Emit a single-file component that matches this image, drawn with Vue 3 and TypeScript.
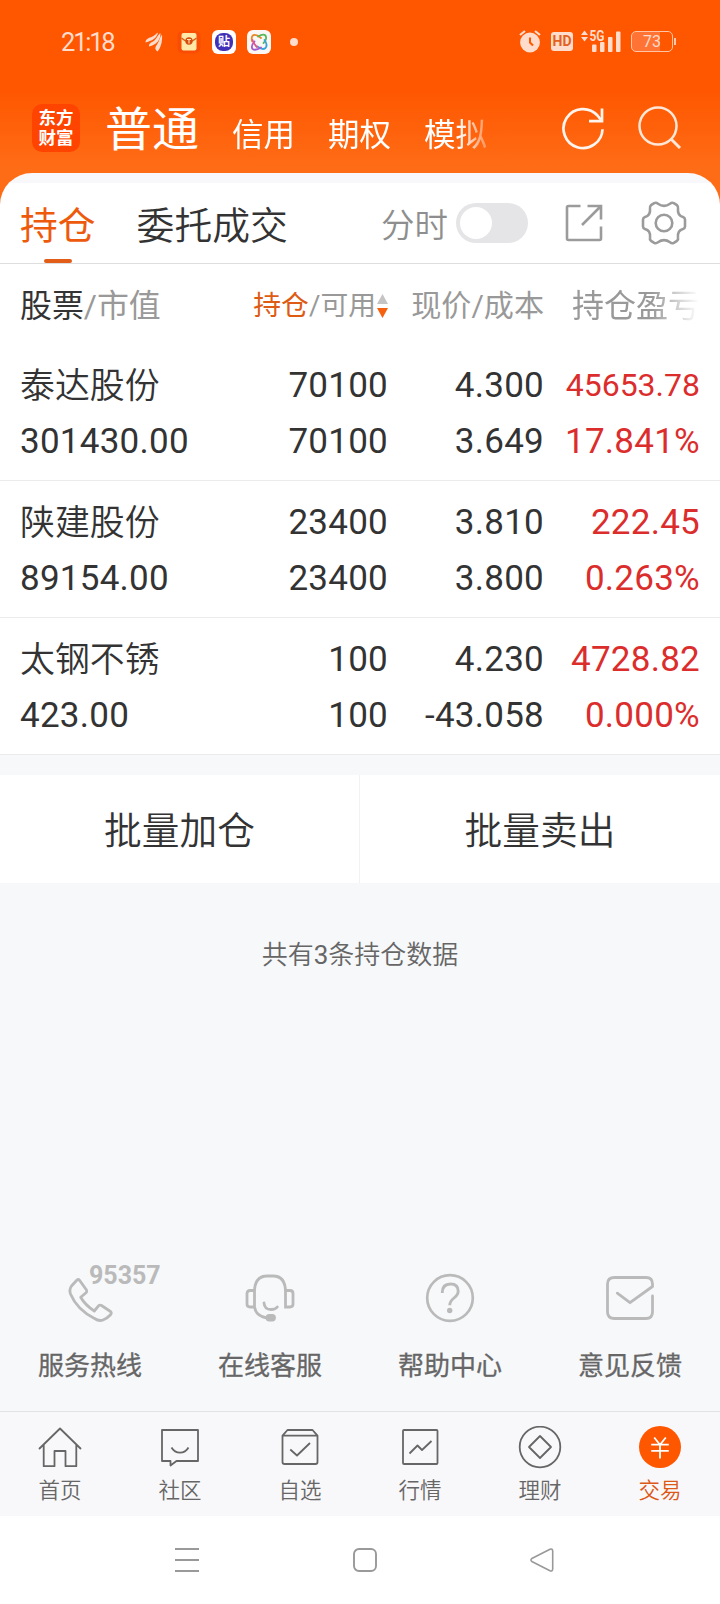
<script setup lang="ts">
interface Holding {
  name: string
  marketValue: string
  position: string
  available: string
  price: string
  cost: string
  profit: string
  ratio: string
}

const accounts: string[] = ['信用', '期权', '模拟']

const holdings: Holding[] = [
  { name: '泰达股份', marketValue: '301430.00', position: '70100', available: '70100', price: '4.300', cost: '3.649', profit: '45653.78', ratio: '17.841%' },
  { name: '陕建股份', marketValue: '89154.00', position: '23400', available: '23400', price: '3.810', cost: '3.800', profit: '222.45', ratio: '0.263%' },
  { name: '太钢不锈', marketValue: '423.00', position: '100', available: '100', price: '4.230', cost: '-43.058', profit: '4728.82', ratio: '0.000%' },
]
</script>

<template>
  <div class="screen">
    <header class="top">
      <div class="status">
        <span class="clock">21:18</span>
        <svg class="s-wing" width="18" height="20" viewBox="0 0 18 20" fill="#ffdccb">
          <path d="M0.500 10.500C0.500 7.500 3 6 6.500 5C9.500 4 11 1.500 13 0.500C12 6 8 8.500 0.500 10.500Z" />
          <path d="M4 14.500C3.500 12 5 11 8 9.500C11.500 7.500 12.500 3 15.500 1C15.500 8 12 12.500 4 14.500Z" />
          <path d="M12.500 19.500C10 17.500 9.500 16 12 12.500C14.500 9 14.500 5.500 17 2.500C17.500 8 16.500 15 12.500 19.500Z" />
        </svg>
        <svg class="s-mail" width="24" height="24" viewBox="0 0 24 24">
          <rect x="0.500" y="0.500" width="23" height="23" rx="6" fill="#f94d05" />
          <rect x="4.500" y="3" width="15" height="17.500" rx="2" fill="#ffe8a8" />
          <path d="M4.500 8Q8 11.500 12 11.500T19.500 8" fill="none" stroke="#d6631c" stroke-width="1.200" />
          <circle cx="12" cy="11" r="3.700" fill="#d84a10" />
          <path d="M10 9.500h4M12 9.500v4" stroke="#ffe8a8" stroke-width="1.100" />
        </svg>
        <span class="s-tie"><span class="s-tie-in">贴</span></span>
        <svg class="s-knot" width="24" height="24" viewBox="0 0 24 24" fill="none" stroke-width="1.800" stroke-linecap="round">
          <rect width="24" height="24" rx="6" fill="#fbf7f4" />
          <path d="M5 11Q4 5.500 7 5Q10 4.500 14 8" stroke="#e98a2a" />
          <path d="M11 6.500Q16 3.500 18.500 5.500Q20.500 9 16.500 13" stroke="#57b85b" />
          <path d="M17.500 10Q21 15 18.500 18Q15.500 20.500 10.500 16.500" stroke="#37a4dc" />
          <path d="M14 17.500Q8.500 21 5.500 19Q3.500 16 7.500 11.500" stroke="#a45bd0" />
          <path d="M5.500 10Q6.500 14 10 17" stroke="#e0578a" />
        </svg>
        <i class="s-dot"></i>
        <span class="grow"></span>
        <svg width="22" height="23" viewBox="0 0 22 23">
          <circle cx="11" cy="12.500" r="9.900" fill="#ffdccb" />
          <path d="M1 5L6 1M21 5L16 1" stroke="#ffdccb" stroke-width="2.200" />
          <path d="M11 7.500V12.500L14 15.500" fill="none" stroke="#ff5600" stroke-width="2" />
        </svg>
        <span class="hd">HD</span>
        <svg class="s-signal" width="40" height="23" viewBox="0 0 40 23" fill="#ffdccb">
          <path d="M0 5L3.500 0.500L7 5ZM0 7L3.500 11.500L7 7Z" />
          <text x="8.500" y="10.500" class="fiveg" textLength="15" lengthAdjust="spacingAndGlyphs">5G</text>
          <rect x="11" y="14.500" width="4.500" height="7.500" rx="1" />
          <rect x="19" y="12" width="4.500" height="10" rx="1" />
          <rect x="27" y="7" width="4.500" height="15" rx="1" />
          <rect x="35" y="1.500" width="4.500" height="20.500" rx="1" />
        </svg>
        <span class="battery">73</span>
        <i class="bat-tip"></i>
      </div>
      <div class="accounts">
        <div class="logo"><span>东方</span><span>财富</span></div>
        <span class="acc-main">普通</span>
        <div class="acc-list">
          <span v-for="a in accounts" :key="a">{{ a }}</span>
        </div>
        <svg class="refresh" width="44" height="44" viewBox="0 0 44 44" fill="none" stroke="#fff5ee" stroke-width="2.700">
          <path d="M41.500 23.200A19.500 19.500 0 1 1 36.500 9.500L40.800 15" />
          <path d="M28 15.200H41V2.500" />
        </svg>
        <svg class="search" width="44" height="44" viewBox="0 0 44 44" fill="none" stroke="#ffe6d6" stroke-width="2.500">
          <circle cx="20" cy="20" r="18.500" />
          <path d="M33 33L42 42" stroke-width="3" />
        </svg>
      </div>
    </header>

    <section class="card">
      <div class="tabs">
        <span class="tab active">持仓</span>
        <span class="tab orders">委托成交</span>
        <span class="grow"></span>
        <span class="minute">分时</span>
        <span class="toggle"><i></i></span>
        <svg class="share" width="38" height="38" viewBox="0 0 38 38" fill="none" stroke="#9b9b9b" stroke-width="2.600">
          <path d="M15.500 2H3.500Q2 2 2 3.500V34.500Q2 36 3.500 36H34.500Q36 36 36 34.500V22.500" />
          <path d="M22.500 2H36V15.500M36 2L17 21" />
        </svg>
        <svg class="gear" width="46" height="46" viewBox="0 0 46 46" fill="none" stroke="#9b9b9b" stroke-width="2.600" stroke-linejoin="round">
          <path d="M13.200 3.200Q15 2.200 17 3.700Q23 8 29 3.700Q31 2.200 32.800 3.200L36 5.200Q37.500 6.500 37 8.500C36.500 13 38 16 42 17Q44 17.800 44 19.500V26.500Q44 28.200 42 29C38 30 36.500 33 37 37.500Q37.500 39.500 36 40.800L32.800 42.800Q31 43.800 29 42.300Q23 38 17 42.300Q15 43.800 13.200 42.800L10 40.800Q8.500 39.500 9 37.500C9.500 33 8 30 4 29Q2 28.200 2 26.500V19.500Q2 17.800 4 17C8 16 9.500 13 9 8.500Q8.500 6.500 10 5.200Z" />
          <circle cx="23" cy="23" r="8.300" />
        </svg>
      </div>

      <div class="grid head">
        <span class="h-stock"><b>股票</b>/市值</span>
        <span class="h-pos">
          <span class="on">持仓</span>/可用
          <svg width="11" height="24" viewBox="0 0 11 24">
            <path d="M0 10L5.500 0L11 10Z" fill="#c4c4c4" />
            <path d="M0 14H11L5.500 24Z" fill="#f5610f" />
          </svg>
        </span>
        <span class="h-price">现价/成本</span>
        <span class="h-profit">持仓盈亏</span>
      </div>

      <div v-for="h in holdings" :key="h.name" class="grid row">
        <span class="name">{{ h.name }}</span>
        <span class="num">{{ h.position }}</span>
        <span class="num">{{ h.price }}</span>
        <span class="num red" :class="{ compact: h.profit.length > 7 }">{{ h.profit }}</span>
        <span class="val">{{ h.marketValue }}</span>
        <span class="num">{{ h.available }}</span>
        <span class="num">{{ h.cost }}</span>
        <span class="num red">{{ h.ratio }}</span>
      </div>
    </section>

    <div class="batch">
      <span>批量加仓</span>
      <span>批量卖出</span>
    </div>

    <p class="summary">共有<b>3</b>条持仓数据</p>

    <div class="services">
      <div class="service">
        <svg width="74" height="60" viewBox="0 0 74 60" fill="none" stroke="#bababa" stroke-width="2.800" stroke-linejoin="round">
          <path d="M13.500 14.500Q15 12.500 16.700 14.500L23.500 24Q24.200 25.500 23 26.800L17.700 31.300Q22 39 31.300 45L35.500 39.800Q37 38.500 38.500 39.500L47.500 45.500Q49 47 47.500 48.700Q44 52.500 40 54Q36 55.500 31.500 52.500Q14 43.500 7.500 28Q6 23.500 8.500 20Z" />
        </svg>
        <span class="hotline">95357</span>
        <span class="label">服务热线</span>
      </div>
      <div class="service">
        <svg width="50" height="60" viewBox="0 0 50 60" fill="none" stroke="#bababa" stroke-width="2.800" stroke-linecap="round">
          <path d="M9.500 41V26Q9.500 10 22 10H28Q40.500 10 40.500 26V41H45Q48 41 48 38V27.500Q48 24.500 45 24.500H40.500M9.500 24.500H5Q2 24.500 2 27.500V38Q2 41 5 41H9.500Q11 50.500 22 52" />
          <path d="M19 37Q19.500 43.500 26 43.500Q30.500 43.500 32.300 41" />
          <rect x="22" y="49.500" width="7.500" height="4.500" rx="2.200" fill="#bababa" />
        </svg>
        <span class="label">在线客服</span>
      </div>
      <div class="service">
        <svg width="50" height="60" viewBox="0 0 50 60" fill="none" stroke="#bababa" stroke-width="2.700">
          <circle cx="25" cy="32" r="22.800" />
          <path d="M17.200 27Q17.200 18 25.500 18Q33.200 18 33.200 25.200Q33.200 28.500 29 32Q24.700 35.500 24.700 39.300" stroke-width="2.900" />
          <circle cx="24.700" cy="44.500" r="2.700" fill="#bababa" stroke="none" />
        </svg>
        <span class="label">帮助中心</span>
      </div>
      <div class="service">
        <svg width="50" height="60" viewBox="0 0 50 60" fill="none" stroke="#bababa" stroke-width="2.800" stroke-linecap="round" stroke-linejoin="round">
          <path d="M12.300 27.200L25 36.700L47.500 20.500V18Q47.500 11.500 41 11.500H9.500Q2.500 11.500 2.500 18V46Q2.500 52.500 9.500 52.500H41Q47.500 52.500 47.500 46V30" />
        </svg>
        <span class="label">意见反馈</span>
      </div>
    </div>

    <nav class="nav">
      <div class="item">
        <svg width="44" height="44" viewBox="0 0 44 44">
          <path d="M1 23L22 2.500L43 23M5.700 19V40.200H16.500V25H27.500V40.200H38.300V19" />
        </svg>
        <span>首页</span>
      </div>
      <div class="item">
        <svg width="44" height="44" viewBox="0 0 44 44">
          <path d="M4 4H40V35H18.500L12.500 39.500V35H4Z" /><path d="M13.500 21.500Q16.500 26.700 22 26.700T30.500 21.500" />
        </svg>
        <span>社区</span>
      </div>
      <div class="item">
        <svg width="44" height="44" viewBox="0 0 44 44">
          <path d="M4.500 9.700L9.500 4H34.500L39.500 9.700V36Q39.500 38 37.500 38H6.500Q4.500 38 4.500 36ZM4.500 9.700H39.500" /><path d="M12.300 23.500L19 29.500L32 17" />
        </svg>
        <span>自选</span>
      </div>
      <div class="item">
        <svg width="44" height="44" viewBox="0 0 44 44">
          <rect x="5" y="4" width="34.500" height="34" rx="1" /><path d="M11.500 27.500L19.500 19.500L24 24L33.500 15" />
        </svg>
        <span>行情</span>
      </div>
      <div class="item">
        <svg width="44" height="44" viewBox="0 0 44 44">
          <circle cx="22" cy="21" r="20.300" /><path d="M22 10L33 21L22 32L11 21Z" />
        </svg>
        <span>理财</span>
      </div>
      <div class="item current">
        <svg width="44" height="44" viewBox="0 0 44 44">
          <circle cx="22" cy="21" r="21" class="disc" />
          <path d="M16.200 11.500L22 18.700L27.800 11.500M22 18.700V32.500M13.200 18.700H30.800M13.200 24.800H30.800" class="yen" />
        </svg>
        <span>交易</span>
      </div>
    </nav>

    <div class="system">
      <svg width="24" height="26" viewBox="0 0 24 26" fill="none" stroke="#999" stroke-width="1.900">
        <path d="M0 2H24M0 13H24M0 24H24" />
      </svg>
      <svg width="26" height="26" viewBox="0 0 26 26" fill="none" stroke="#999" stroke-width="1.900">
        <rect x="2" y="2" width="22" height="22" rx="5" />
      </svg>
      <svg width="24" height="26" viewBox="0 0 24 26" fill="none" stroke="#999" stroke-width="1.600" stroke-linejoin="round">
        <path d="M1.800 11.500L20 2.300Q22.500 1.300 22.700 4V22Q22.500 24.700 20 23.700L1.800 14.500Q0 13 1.800 11.500Z" />
      </svg>
    </div>
  </div>
</template>

<style>
body {
  margin: 0;
  background: #f7f8fa;
}
</style>

<style scoped>
.screen {
  width: 720px;
  height: 1604px;
  display: flex;
  flex-direction: column;
  overflow: hidden;
  background: #f7f8fa;
  color: #333;
  font-family: Roboto, "Noto Sans CJK SC", sans-serif;
  font-weight: 400;
  white-space: nowrap;
}
svg { display: block; flex: none; }
.grow { flex: 1; }

.top {
  height: 205px;
  flex: none;
  background: linear-gradient(#ff5600 0, #ff5600 88px, #ff6c16 168px);
}
.status {
  height: 83px;
  display: flex;
  align-items: center;
  padding: 0 44px 0 61px;
  color: #ffdccb;
}
.clock {
  width: 84px;
  font-size: 25.500px;
  letter-spacing: -2.200px;
}
.s-mail { margin-left: 14px; margin-right: 11px; }
.s-tie {
  width: 24px;
  height: 24px;
  box-sizing: border-box;
  padding: 3px;
  border-radius: 6px;
  background: #fff;
}
.s-tie-in {
  display: block;
  height: 18px;
  border-radius: 8px;
  background: #4230b8;
  color: #fff;
  font-size: 12px;
  font-weight: 700;
  line-height: 18px;
  text-align: center;
}
.s-knot { margin-left: 11px; }
.s-dot {
  width: 8px;
  height: 8px;
  margin-left: 19px;
  border-radius: 50%;
  background: #ffdccb;
}
.hd {
  width: 22px;
  height: 19px;
  margin-left: 10px;
  border-radius: 3px;
  background: #ffdccb;
  color: #e2611e;
  font-size: 14px;
  font-weight: 700;
  line-height: 19px;
  text-align: center;
}
.s-signal { margin-left: 8px; overflow: visible; }
.fiveg { font: 700 14px Roboto, sans-serif; }
.battery {
  width: 42px;
  height: 21px;
  box-sizing: border-box;
  margin-left: 10px;
  border: 1.500px solid #ffc5a6;
  border-radius: 5px;
  background: linear-gradient(90deg, #ff7435 70%, transparent 70%);
  color: #ffdccb;
  font-size: 16px;
  line-height: 19px;
  text-align: center;
}
.bat-tip {
  width: 2px;
  height: 7px;
  margin-left: 1px;
  background: #ffc5a6;
}

.accounts {
  height: 90px;
  display: flex;
  align-items: center;
  padding: 0 38px 0 32px;
  color: #fff;
}
.logo {
  width: 48px;
  height: 48px;
  box-sizing: border-box;
  padding-top: 4px;
  border-radius: 10px;
  background: #ff4400;
  font-size: 17.500px;
  font-weight: 700;
  line-height: 20px;
  text-align: center;
}
.logo span { display: block; }
.acc-main {
  margin-left: 25px;
  padding-top: 3px;
  font-size: 47px;
  line-height: 60px;
}
.acc-list {
  display: flex;
  gap: 33px;
  width: 290px;
  margin-left: 33px;
  padding-top: 16px;
  font-size: 31.500px;
  line-height: 40px;
  -webkit-mask-image: linear-gradient(90deg, #000 226px, transparent 268px);
  mask-image: linear-gradient(90deg, #000 226px, transparent 268px);
}
.refresh { margin-left: auto; }
.search { margin-left: 33px; }

.card {
  flex: none;
  margin-top: -32px;
  padding-top: 10px;
  border-radius: 32px 32px 0 0;
  background: linear-gradient(#f8f8fa 10px, #fff 10px);
}
.tabs {
  height: 80px;
  display: flex;
  align-items: center;
  padding: 0 33px 0 20px;
  border-bottom: 1px solid #dedede;
}
.tab {
  position: relative;
  font-size: 37.800px;
  line-height: 80px;
  padding-top: 3px;
  height: 77px;
}
.active { color: #ee5a0c; }
.active::after {
  content: "";
  position: absolute;
  left: 24px;
  bottom: 0;
  width: 28px;
  height: 4px;
  border-radius: 2px;
  background: #e25d18;
}
.orders { margin-left: 41px; font-weight: 350; }
.minute {
  padding-bottom: 2px;
  color: #8e8e8e;
  font-size: 33.500px;
  font-weight: 350;
}
.toggle {
  width: 72px;
  height: 40px;
  box-sizing: border-box;
  margin-left: 8px;
  padding: 4px;
  border-radius: 20px;
  background: #e5e5e7;
}
.toggle i {
  display: block;
  width: 32px;
  height: 32px;
  border-radius: 50%;
  background: #fff;
}
.share { margin-left: 37px; }
.gear { margin-left: 38px; }

.grid {
  display: grid;
  grid-template-columns: 210px 158px 156px 156px;
  padding: 0 20px;
}
.grid.head {
  height: 80px;
  line-height: 84px;
  color: #999;
}
.h-stock { font-size: 31.900px; }
.h-stock b { color: #333; font-weight: 400; }
.h-pos {
  display: flex;
  align-items: center;
  justify-content: flex-end;
  font-size: 27.800px;
}
.on { color: #de5b14; }
.h-pos svg { margin-left: 1px; }
.h-price { font-size: 30.100px; text-align: right; }
.h-profit {
  padding-left: 28px;
  font-size: 32px;
  overflow: hidden;
  -webkit-mask-image: linear-gradient(90deg, #000 108px, transparent 155px);
  mask-image: linear-gradient(90deg, #000 108px, transparent 155px);
}
.grid.row {
  grid-template-rows: 56px 56px;
  height: 136px;
  box-sizing: border-box;
  padding-top: 13px;
  margin-bottom: 1px;
  box-shadow: 0 1px 0 #ebebeb;
  line-height: 57px;
}
.name { font-size: 34.900px; font-weight: 350; padding-top: 1px; }
.val, .num {
  font-size: 35px;
  letter-spacing: 0.250px;
}
.num { text-align: right; }
.red { color: #dc2d2d; }
.num.compact { font-size: 32px; letter-spacing: 0; }

.batch {
  display: flex;
  flex: none;
  height: 108px;
  margin-top: 20px;
}
.batch span {
  width: 360px;
  box-sizing: border-box;
  background: #fff;
  font-size: 37.700px;
  font-weight: 350;
  line-height: 113px;
  text-align: center;
}
.batch span:first-child { border-right: 1px solid #f2f2f2; }

.summary {
  flex: none;
  margin: 52px 0 0;
  color: #666;
  font-size: 26px;
  font-weight: 350;
  line-height: 40px;
  text-align: center;
}
.summary b { font-weight: 400; }

.services {
  display: grid;
  grid-template-columns: repeat(4, 1fr);
  flex: none;
  height: 145px;
  margin-top: auto;
}
.service {
  position: relative;
  display: flex;
  flex-direction: column;
  align-items: center;
}
.service:first-child svg { margin-left: 20px; }
.hotline {
  position: absolute;
  left: 89px;
  top: -6px;
  color: #bababa;
  font: 700 25px/32px Roboto, sans-serif;
}
.label {
  margin-top: 20px;
  color: #666;
  font-size: 26px;
  line-height: 40px;
  -webkit-text-stroke: 0.300px #666;
}

.nav {
  display: grid;
  grid-template-columns: repeat(6, 1fr);
  flex: none;
  height: 105px;
  box-sizing: border-box;
  padding-top: 14px;
  border-top: 1px solid #e2e3e5;
  background: #f8f8fa;
}
.item {
  display: flex;
  flex-direction: column;
  align-items: center;
  color: #666;
  font-size: 21.500px;
  font-weight: 350;
  line-height: 42px;
}
.item svg {
  fill: none;
  stroke: #666;
  stroke-width: 1.800;
  stroke-linejoin: round;
}
.item .disc { fill: #ff5600; stroke: none; }
.item .yen { stroke: #fff; }
.current { color: #dd5918; }

.system {
  display: flex;
  align-items: center;
  flex: none;
  gap: 153px;
  height: 88px;
  padding-left: 175px;
  background: #fff;
}
.system svg:last-child { margin-left: -1px; }
</style>
